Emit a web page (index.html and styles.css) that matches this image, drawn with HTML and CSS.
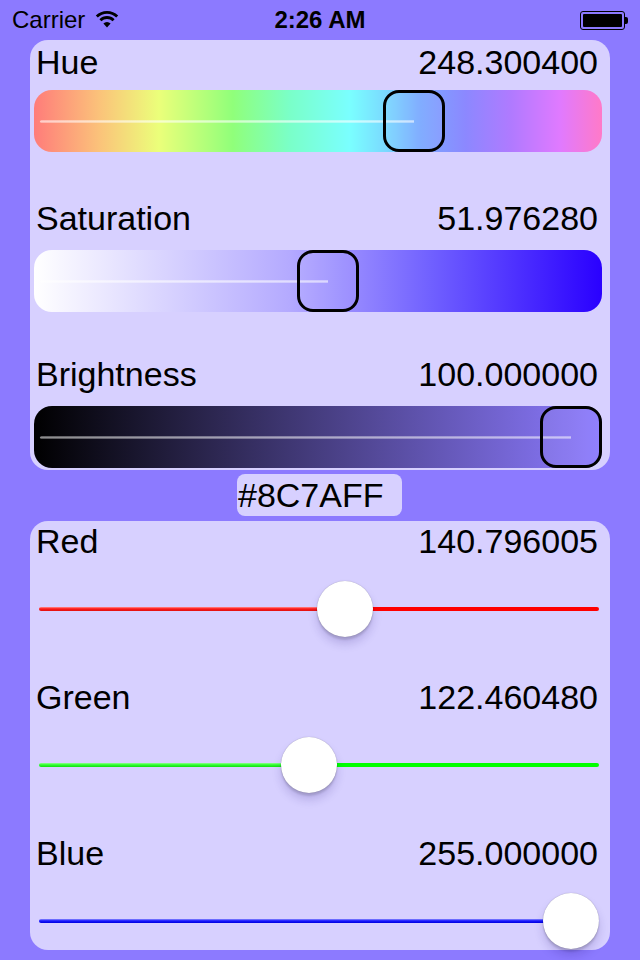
FILE: index.html
```html
<!DOCTYPE html>
<html>
<head>
<meta charset="utf-8">
<title>Color Picker</title>
<link rel="stylesheet" href="styles.css">
</head>
<body>
<div class="screen">
  <div class="status">
    <div class="status-left">
      <span class="carrier">Carrier</span>
      <svg class="wifi" width="24" height="18" viewBox="0 0 24 18">
        <path d="M1.8 6.6 A14.5 14.5 0 0 1 22.2 6.6" fill="none" stroke="#000" stroke-width="2.8"/>
        <path d="M5.4 10.2 A9.4 9.4 0 0 1 18.6 10.2" fill="none" stroke="#000" stroke-width="2.8"/>
        <path d="M12 17.5 L8.4 13.6 A5 5 0 0 1 15.6 13.6 Z" fill="#000"/>
      </svg>
    </div>
    <div class="time">2:26 AM</div>
    <div class="status-right">
      <div class="battery"><div class="battery-fill"></div></div>
      <div class="battery-nub"></div>
    </div>
  </div>

  <div class="panel panel-hsb">
    <div class="row row-1">
      <div class="label-row"><span>Hue</span><span>248.300400</span></div>
      <div class="cbar cbar-hue">
        <div class="cline" style="width:374px"></div>
        <div class="cthumb" style="left:349px"></div>
      </div>
    </div>
    <div class="row row-2">
      <div class="label-row"><span>Saturation</span><span>51.976280</span></div>
      <div class="cbar cbar-sat">
        <div class="cline" style="width:288px"></div>
        <div class="cthumb" style="left:263px"></div>
      </div>
    </div>
    <div class="row row-3">
      <div class="label-row"><span>Brightness</span><span>100.000000</span></div>
      <div class="cbar cbar-bri">
        <div class="cline cline-dark" style="width:531px"></div>
        <div class="cthumb" style="left:506px"></div>
      </div>
    </div>
  </div>

  <div class="hex-row">
    <div class="hex">#8C7AFF</div>
  </div>

  <div class="panel panel-rgb">
    <div class="srow">
      <div class="label-row"><span>Red</span><span>140.796005</span></div>
      <div class="slider slider-red">
        <div class="track">
          <div class="track-min" style="width:306px"></div>
          <div class="track-max"></div>
        </div>
        <div class="knob" style="left:278px"></div>
      </div>
    </div>
    <div class="srow">
      <div class="label-row"><span>Green</span><span>122.460480</span></div>
      <div class="slider slider-green">
        <div class="track">
          <div class="track-min" style="width:270px"></div>
          <div class="track-max"></div>
        </div>
        <div class="knob" style="left:242px"></div>
      </div>
    </div>
    <div class="srow">
      <div class="label-row"><span>Blue</span><span>255.000000</span></div>
      <div class="slider slider-blue">
        <div class="track">
          <div class="track-min" style="width:532px"></div>
          <div class="track-max"></div>
        </div>
        <div class="knob" style="left:504px"></div>
      </div>
    </div>
  </div>
</div>
</body>
</html>
```
FILE: styles.css
```css
* { box-sizing: border-box; }

html, body {
  margin: 0;
  padding: 0;
  background: #8C7AFF;
}

body {
  font-family: "Liberation Sans", Arial, Helvetica, sans-serif;
  color: #000;
}

.screen {
  width: 640px;
  height: 960px;
  overflow: hidden;
  background: #8C7AFF;
}

/* status bar */
.status {
  height: 40px;
  display: grid;
  grid-template-columns: 1fr auto 1fr;
  align-items: center;
  font-size: 24px;
  line-height: 40px;
}

.status-left {
  display: flex;
  align-items: center;
  padding-left: 12px;
  gap: 10px;
}

.wifi { display: block; margin-top: -2px; }

.time {
  font-weight: bold;
}

.status-right {
  display: flex;
  justify-content: flex-end;
  align-items: center;
  padding-right: 12px;
}

.battery {
  width: 45px;
  height: 19px;
  border: 1px solid #000;
  border-radius: 3px;
  padding: 2px;
}

.battery-fill {
  width: 100%;
  height: 100%;
  background: #000;
  border-radius: 1px;
}

.battery-nub {
  width: 3px;
  height: 7px;
  background: #000;
  border-radius: 0 2px 2px 0;
}

/* panels */
.panel {
  margin-left: 30px;
  width: 580px;
  background: #D7D0FF;
  border-radius: 18px;
}

.panel-hsb {
  height: 430px;
  padding-top: 2px;
}

.label-row {
  display: flex;
  justify-content: space-between;
  height: 40px;
  line-height: 40px;
  font-size: 34px;
  padding: 0 12px 0 6px;
  white-space: nowrap;
}

.row-2 { margin-top: 46px; }
.row-3 { margin-top: 42px; }

.cbar {
  position: relative;
  height: 62px;
  margin: 12px 8px 0 4px;
  border-radius: 18px;
}

.row-1 .cbar { margin-top: 8px; }

.cbar-hue {
  background: linear-gradient(to right,
    #FF7C7A 0%,
    #FBC37A 11.6%,
    #EBFF7A 22%,
    #90FF7A 35%,
    #7AFFC8 45%,
    #7AFFFF 55.6%,
    #7AD8FF 62%,
    #7AA8FF 68%,
    #8C88FF 76%,
    #B07AFF 84%,
    #E07AFF 92.6%,
    #FF7AC8 100%);
}

.cbar-sat {
  background: linear-gradient(to right, #FFFFFF 0%, #B4AAFF 45%, #7060FF 70%, #2A00FF 100%);
}

.cbar-bri {
  background: linear-gradient(to right, #000000 0%, #8C7AFF 100%);
}

.cline {
  position: absolute;
  left: 6px;
  top: 30px;
  height: 3px;
  border-radius: 2px 0 0 2px;
  background: linear-gradient(to bottom, rgba(255,255,255,0.35), rgba(255,255,255,0.6) 50%, rgba(255,255,255,0.3));
}

.cline-dark {
  background: linear-gradient(to bottom, rgba(255,255,255,0.3), rgba(255,255,255,0.55) 50%, rgba(255,255,255,0.25));
}

.cthumb {
  position: absolute;
  top: 0;
  width: 62px;
  height: 62px;
  border: 3px solid #000;
  border-radius: 16px;
  background: rgba(255,255,255,0.06);
}

/* hex */
.hex-row {
  height: 42px;
  margin-top: 4px;
  padding-left: 237px;
}

.hex {
  width: 165px;
  height: 42px;
  line-height: 42px;
  font-size: 34px;
  background: #D7D0FF;
  border-radius: 8px;
  padding-left: 1px;
}

/* rgb panel */
.panel-rgb {
  margin-top: 5px;
  height: 429px;
}

.srow + .srow { margin-top: 40px; }

.slider {
  position: relative;
  height: 56px;
  margin: 20px 11px 0 9px;
  display: flex;
  align-items: center;
}

.track {
  display: flex;
  width: 100%;
  height: 4px;
}

.track-min {
  height: 4px;
  border-radius: 2px 0 0 2px;
}

.track-max {
  flex: 1;
  height: 4px;
  border-radius: 0 2px 2px 0;
}

.slider-red .track-min { background: linear-gradient(to bottom, #ff9090, #ff1a1a 45%, #e01010); }
.slider-red .track-max { background: #FF0000; }

.slider-green .track-min { background: linear-gradient(to bottom, #90ff90, #30ff30 45%, #10e010); }
.slider-green .track-max { background: #00FF00; }

.slider-blue .track-min { background: linear-gradient(to bottom, #8a8aff, #1a1aff 45%, #0000e0); }
.slider-blue .track-max { background: #0000FF; }

.knob {
  position: absolute;
  top: 0;
  width: 56px;
  height: 56px;
  border-radius: 50%;
  background: #fff;
  box-shadow: 0 0 1px rgba(0,0,0,0.35), 0 3px 2px rgba(0,0,0,0.12), 0 7px 10px rgba(40,20,120,0.18);
}
```
